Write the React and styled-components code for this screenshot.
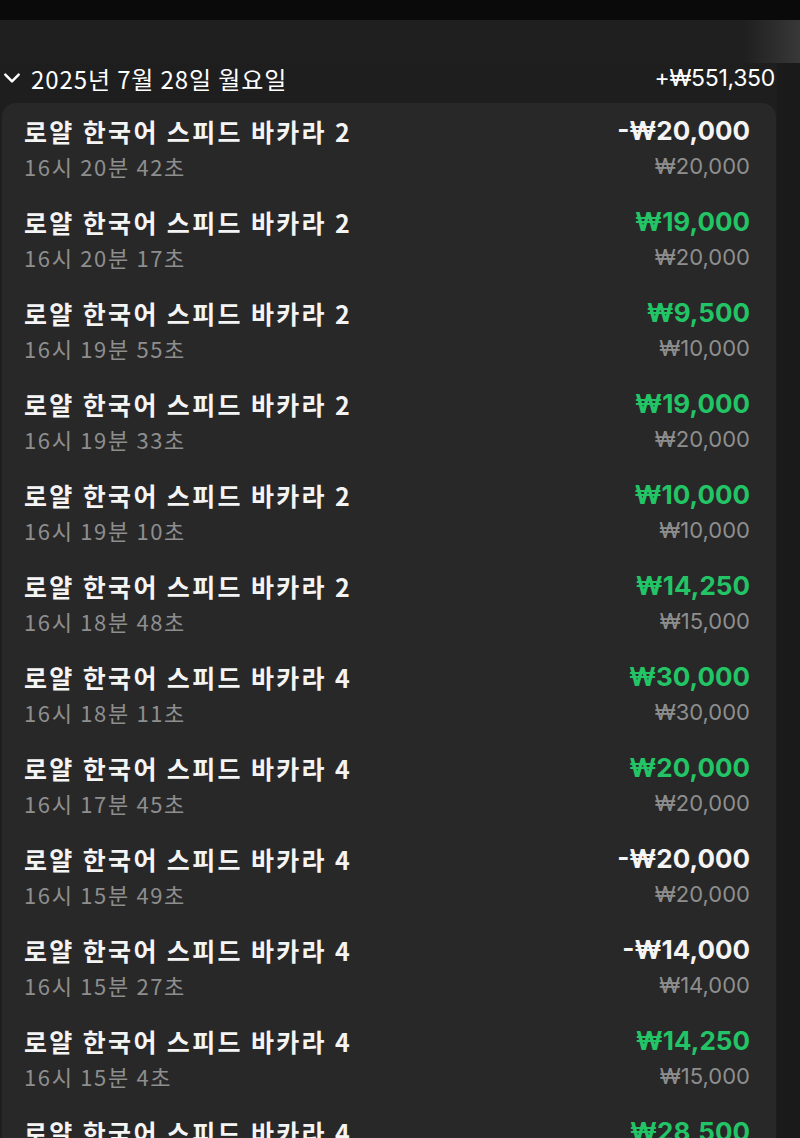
import React from "react";
import styled, { createGlobalStyle } from "styled-components";

const GlobalStyle = createGlobalStyle`
  html, body {
    margin: 0;
    padding: 0;
    background: #1e1e1e;
    height: 1138px;
    overflow: hidden;
  }
  * { box-sizing: border-box; }
`;

const Page = styled.div`
  display: flex;
  flex-direction: column;
  width: 800px;
  height: 1138px;
  overflow: hidden;
  background: #1e1e1e;
  font-family: "Noto Sans CJK KR", "Noto Sans", sans-serif;
  color: #fff;
`;

const TopBar = styled.div`
  flex: none;
  height: 20px;
  background: #0a0a0a;
`;

const TabStrip = styled.div`
  flex: none;
  height: 43px;
  background: linear-gradient(to right, #1f1f1f 0%, #1f1f1f 93%, #383838 100%);
`;

const Body = styled.div`
  display: flex;
  flex: 1;
  min-height: 0;
`;

const Content = styled.div`
  width: 777px;
  display: flex;
  flex-direction: column;
`;

const SideStrip = styled.div`
  flex: 1;
  background: #1a1a1a;
`;

const DayHeader = styled.div`
  display: flex;
  align-items: center;
  height: 30px;
  padding: 0 2px 0 2px;
  margin-bottom: 10px;
`;

const Chevron = styled.svg`
  width: 20px;
  height: 20px;
  margin-right: 9px;
`;

const DayLabel = styled.div`
  flex: 1;
  font-size: 24px;
  letter-spacing: 0.9px;
`;

const DayTotal = styled.div`
  font-family: "Inter", "Noto Sans CJK KR", sans-serif;
  font-size: 23px;
  letter-spacing: -0.3px;
`;

const Card = styled.div`
  margin-left: 2px;
  width: 774px;
  background: #282828;
  border-radius: 14px 14px 0 0;
  padding: 0 26px 0 22px;
`;

const Row = styled.div`
  display: flex;
  justify-content: space-between;
  height: 91px;
  padding-top: 12px;
`;

const Side = styled.div`
  display: flex;
  flex-direction: column;
  align-items: ${(p) => (p.$right ? "flex-end" : "flex-start")};
`;

const Title = styled.div`
  font-size: 25px;
  font-weight: 700;
  line-height: 32px;
  letter-spacing: 2.35px;
  color: #f4f4f4;
`;

const Sub = styled.div`
  margin-top: 3px;
  font-size: 22px;
  line-height: 32px;
  color: #8e8e8e;
  letter-spacing: 1.65px;
`;

const Amount = styled.div`
  font-family: "Inter", "Noto Sans CJK KR", sans-serif;
  font-size: 26px;
  font-weight: 700;
  line-height: 32px;
  color: ${(p) => (p.$win ? "#22c466" : "#f4f4f4")};
`;

const Stake = styled.div`
  margin-top: 3px;
  font-family: "Inter", "Noto Sans CJK KR", sans-serif;
  font-size: 22px;
  line-height: 32px;
  color: #8e8e8e;
`;

const rows = [
  ["2", "16시 20분 42초", "-₩20,000", "₩20,000"],
  ["2", "16시 20분 17초", "₩19,000", "₩20,000"],
  ["2", "16시 19분 55초", "₩9,500", "₩10,000"],
  ["2", "16시 19분 33초", "₩19,000", "₩20,000"],
  ["2", "16시 19분 10초", "₩10,000", "₩10,000"],
  ["2", "16시 18분 48초", "₩14,250", "₩15,000"],
  ["4", "16시 18분 11초", "₩30,000", "₩30,000"],
  ["4", "16시 17분 45초", "₩20,000", "₩20,000"],
  ["4", "16시 15분 49초", "-₩20,000", "₩20,000"],
  ["4", "16시 15분 27초", "-₩14,000", "₩14,000"],
  ["4", "16시 15분 4초", "₩14,250", "₩15,000"],
  ["4", "16시 14분 40초", "₩28,500", "₩30,000"],
];

export default function App() {
  return (
    <Page>
      <GlobalStyle />
      <TopBar />
      <TabStrip />
      <Body>
        <Content>
          <DayHeader>
            <Chevron viewBox="0 0 24 24" fill="none" stroke="#fff" strokeWidth="3" strokeLinecap="round" strokeLinejoin="round">
              <path d="M4 8l8 8 8-8" />
            </Chevron>
            <DayLabel>2025년 7월 28일 월요일</DayLabel>
            <DayTotal>+₩551,350</DayTotal>
          </DayHeader>
          <Card>
            {rows.map(([table, time, amount, stake], i) => (
              <Row key={i}>
                <Side>
                  <Title>로얄 한국어 스피드 바카라 {table}</Title>
                  <Sub>{time}</Sub>
                </Side>
                <Side $right>
                  <Amount $win={!amount.startsWith("-")}>{amount}</Amount>
                  <Stake>{stake}</Stake>
                </Side>
              </Row>
            ))}
          </Card>
        </Content>
        <SideStrip />
      </Body>
    </Page>
  );
}
